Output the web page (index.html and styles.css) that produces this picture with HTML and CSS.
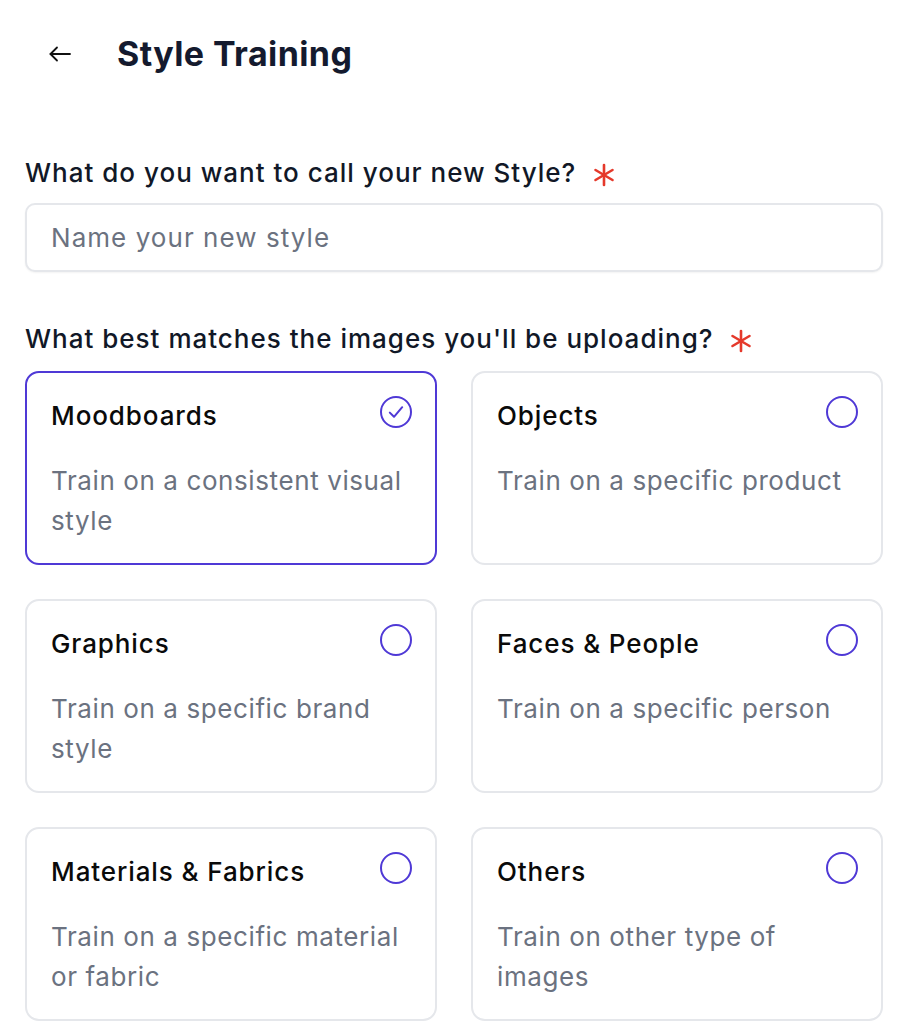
FILE: index.html
```html
<!DOCTYPE html>
<html lang="en">
<head>
<meta charset="utf-8">
<title>Style Training</title>
<link rel="stylesheet" href="styles.css">
</head>
<body>
<div class="page">
  <header class="header">
    <button class="back" aria-label="Back">
      <svg width="24" height="24" viewBox="0 0 24 24" fill="none" stroke="#111111" stroke-width="1.8" stroke-linecap="round" stroke-linejoin="round"><path d="M22 12H2.5"/><path d="M9 5.5L2.5 12L9 18.5"/></svg>
    </button>
    <h1 class="title">Style Training</h1>
  </header>

  <div class="field">
    <label class="label" for="name">What do you want to call your new Style?
      <svg class="req" width="22" height="24" viewBox="0 0 22 24" fill="none" stroke="#e5392b" stroke-width="2.6" stroke-linecap="round"><path d="M11 2V22"/><path d="M2.5 7L19.5 17"/><path d="M19.5 7L2.5 17"/></svg>
    </label>
    <input id="name" class="input" type="text" placeholder="Name your new style">
  </div>

  <div class="field field-2">
    <div class="label">What best matches the images you'll be uploading?
      <svg class="req" width="22" height="24" viewBox="0 0 22 24" fill="none" stroke="#e5392b" stroke-width="2.6" stroke-linecap="round"><path d="M11 2V22"/><path d="M2.5 7L19.5 17"/><path d="M19.5 7L2.5 17"/></svg>
    </div>
    <div class="grid">
      <div class="card selected">
        <div class="card-head"><span class="card-title">Moodboards</span>
          <span class="radio checked"><svg width="32" height="32" viewBox="0 0 32 32" fill="none" stroke="#4f39d6" stroke-width="2" stroke-linecap="round" stroke-linejoin="round"><circle cx="16" cy="16" r="15"/><path d="M9.8 16.6L14 20.8L22.2 11.2"/></svg></span>
        </div>
        <p class="desc">Train on a consistent visual style</p>
      </div>
      <div class="card">
        <div class="card-head"><span class="card-title">Objects</span>
          <span class="radio"><svg width="32" height="32" viewBox="0 0 32 32" fill="none" stroke="#4f39d6" stroke-width="2"><circle cx="16" cy="16" r="15"/></svg></span>
        </div>
        <p class="desc">Train on a specific product</p>
      </div>
      <div class="card">
        <div class="card-head"><span class="card-title">Graphics</span>
          <span class="radio"><svg width="32" height="32" viewBox="0 0 32 32" fill="none" stroke="#4f39d6" stroke-width="2"><circle cx="16" cy="16" r="15"/></svg></span>
        </div>
        <p class="desc">Train on a specific brand style</p>
      </div>
      <div class="card">
        <div class="card-head"><span class="card-title">Faces &amp; People</span>
          <span class="radio"><svg width="32" height="32" viewBox="0 0 32 32" fill="none" stroke="#4f39d6" stroke-width="2"><circle cx="16" cy="16" r="15"/></svg></span>
        </div>
        <p class="desc">Train on a specific person</p>
      </div>
      <div class="card">
        <div class="card-head"><span class="card-title">Materials &amp; Fabrics</span>
          <span class="radio"><svg width="32" height="32" viewBox="0 0 32 32" fill="none" stroke="#4f39d6" stroke-width="2"><circle cx="16" cy="16" r="15"/></svg></span>
        </div>
        <p class="desc">Train on a specific material or fabric</p>
      </div>
      <div class="card">
        <div class="card-head"><span class="card-title">Others</span>
          <span class="radio"><svg width="32" height="32" viewBox="0 0 32 32" fill="none" stroke="#4f39d6" stroke-width="2"><circle cx="16" cy="16" r="15"/></svg></span>
        </div>
        <p class="desc">Train on other type of images</p>
      </div>
    </div>
  </div>
</div>
</body>
</html>
```

FILE: styles.css
```css
* { box-sizing: border-box; }

html, body {
  margin: 0;
  padding: 0;
  background: #ffffff;
}

body {
  font-family: Inter, "Noto Sans", "Liberation Sans", sans-serif;
  color: #111827;
}

.page {
  width: 858px;
  margin-left: 25px;
}

.header {
  height: 108px;
  display: flex;
  align-items: center;
  padding-left: 23px;
}

.back {
  border: 0;
  background: none;
  padding: 0;
  width: 24px;
  height: 24px;
  display: flex;
  cursor: pointer;
}

.title {
  margin: 0 0 0 45px;
  font-size: 34px;
  font-weight: 700;
  line-height: 40px;
  color: #141a2e;
  letter-spacing: 0.4px;
}

.field {
  margin-top: 49px;
}

.field-2 {
  margin-top: 51px;
}

.label {
  display: flex;
  align-items: center;
  font-size: 26px;
  line-height: 32px;
  font-weight: 500;
  letter-spacing: 1px;
  color: #111827;
  height: 32px;
}

.req {
  margin-left: 17px;
  margin-top: 4px;
}

.input {
  display: block;
  width: 100%;
  height: 69px;
  margin-top: 14px;
  border: 2px solid #e5e7eb;
  border-radius: 10px;
  box-shadow: 0 1px 2px rgba(0, 0, 0, 0.05);
  padding: 0 24px;
  font-family: inherit;
  font-size: 26px;
  letter-spacing: 1.05px;
  color: #111827;
  outline: none;
}

.input::placeholder {
  color: #6b7280;
}

.grid {
  margin-top: 16px;
  display: grid;
  grid-template-columns: 1fr 1fr;
  grid-auto-rows: 194px;
  column-gap: 34px;
  row-gap: 34px;
}

.card {
  border: 2px solid #e5e7eb;
  border-radius: 14px;
  padding: 27px 23px 20px 24px;
  background: #fff;
}

.card.selected {
  border-color: #4f39d6;
}

.card-head {
  display: flex;
  justify-content: space-between;
  align-items: flex-start;
  height: 32px;
}

.card-title {
  font-size: 26px;
  line-height: 32px;
  font-weight: 500;
  letter-spacing: 0.9px;
  color: #0a0a0a;
}

.radio {
  display: flex;
  width: 32px;
  height: 32px;
  margin-top: -4px;
}

.desc {
  margin: 29px 0 0;
  font-size: 26px;
  line-height: 39.5px;
  letter-spacing: 0.6px;
  color: #6b7280;
}
```
